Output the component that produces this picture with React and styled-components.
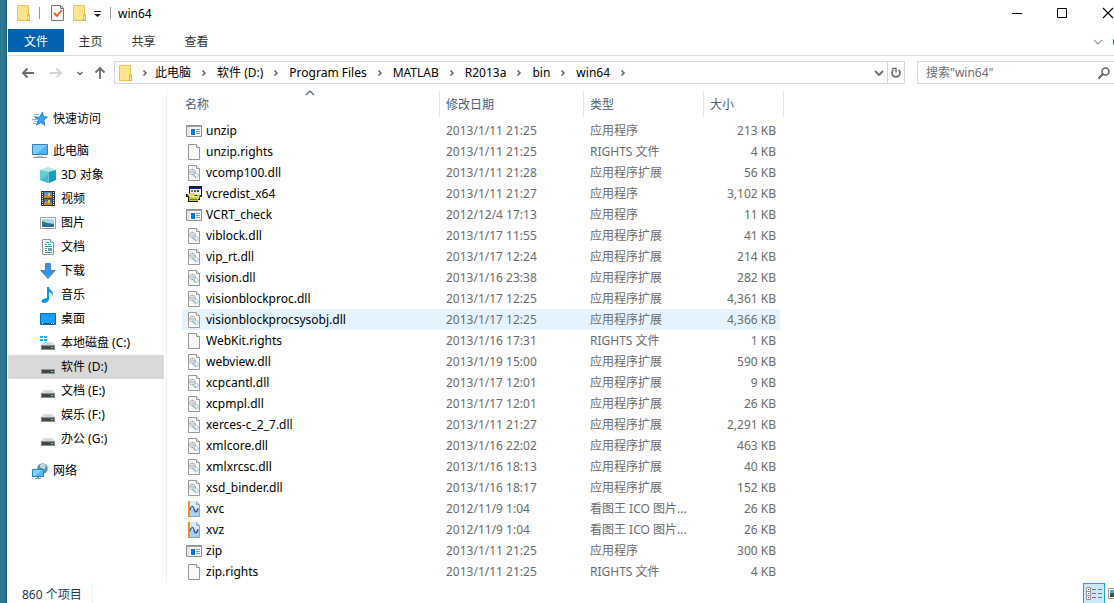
import React, { useState } from "react";
import styled, { createGlobalStyle, css } from "styled-components";

const places = [
  { name: "快速访问", icon: "star" },
  { name: "此电脑", icon: "computer", spaced: true },
  { name: "3D 对象", icon: "cube", nested: true },
  { name: "视频", icon: "video", nested: true },
  { name: "图片", icon: "picture", nested: true },
  { name: "文档", icon: "document", nested: true },
  { name: "下载", icon: "download", nested: true },
  { name: "音乐", icon: "music", nested: true },
  { name: "桌面", icon: "desktop", nested: true },
  { name: "本地磁盘 (C:)", icon: "systemDrive", nested: true },
  { name: "软件 (D:)", icon: "drive", nested: true },
  { name: "文档 (E:)", icon: "drive", nested: true },
  { name: "娱乐 (F:)", icon: "drive", nested: true },
  { name: "办公 (G:)", icon: "drive", nested: true },
  { name: "网络", icon: "network", spaced: true },
];

const crumbs = [
  "此电脑",
  "软件 (D:)",
  "Program Files",
  "MATLAB",
  "R2013a",
  "bin",
  "win64",
];

const types = {
  app: "应用程序",
  blank: "RIGHTS 文件",
  dll: "应用程序扩展",
  installer: "应用程序",
  ico: "看图王 ICO 图片...",
};

const files = [
  ["unzip", "2013/1/11 21:25", "app", "213 KB"],
  ["unzip.rights", "2013/1/11 21:25", "blank", "4 KB"],
  ["vcomp100.dll", "2013/1/11 21:28", "dll", "56 KB"],
  ["vcredist_x64", "2013/1/11 21:27", "installer", "3,102 KB"],
  ["VCRT_check", "2012/12/4 17:13", "app", "11 KB"],
  ["viblock.dll", "2013/1/17 11:55", "dll", "41 KB"],
  ["vip_rt.dll", "2013/1/17 12:24", "dll", "214 KB"],
  ["vision.dll", "2013/1/16 23:38", "dll", "282 KB"],
  ["visionblockproc.dll", "2013/1/17 12:25", "dll", "4,361 KB"],
  ["visionblockprocsysobj.dll", "2013/1/17 12:25", "dll", "4,366 KB"],
  ["WebKit.rights", "2013/1/16 17:31", "blank", "1 KB"],
  ["webview.dll", "2013/1/19 15:00", "dll", "590 KB"],
  ["xcpcantl.dll", "2013/1/17 12:01", "dll", "9 KB"],
  ["xcpmpl.dll", "2013/1/17 12:01", "dll", "26 KB"],
  ["xerces-c_2_7.dll", "2013/1/11 21:27", "dll", "2,291 KB"],
  ["xmlcore.dll", "2013/1/16 22:02", "dll", "463 KB"],
  ["xmlxrcsc.dll", "2013/1/16 18:13", "dll", "40 KB"],
  ["xsd_binder.dll", "2013/1/16 18:17", "dll", "152 KB"],
  ["xvc", "2012/11/9 1:04", "ico", "26 KB"],
  ["xvz", "2012/11/9 1:04", "ico", "26 KB"],
  ["zip", "2013/1/11 21:25", "app", "300 KB"],
  ["zip.rights", "2013/1/11 21:25", "blank", "4 KB"],
];

const page = (
  <>
    <path d="M2.500 .5h8l3 3v12h-11z" fill="#fafafa" stroke="#999" />
    <path d="M10.500 .5v3h3" fill="#fff" stroke="#999" />
  </>
);

const driveBody = (
  <>
    <path d="M4 7h8l3 4H1z" fill="#d5d7da" />
    <path d="M1 10h14v5H1z" fill="#8d9094" />
    <path d="M2 11h12v3H2z" fill="#45484b" />
    <path d="M11 12h2v1h-2z" fill="#4ef04e" />
  </>
);

const drawings = {
  star: (
    <>
      <path d="M2 3.500h5M1 5.500h4M0 8.500h4M2 10.500h3M1 12.500h3" stroke="#6cbdf0" />
      <path d="M10.500 1l.8 4.500 4.200.6-3.600 3 .9 5.400-4-3-4.400 2.700 1.800-4.700-3.200-3 4.700-.4z" fill="#39a2e8" stroke="#1977bd" strokeWidth=".8" />
    </>
  ),
  computer: (
    <>
      <path d="M.5 1.500h15v10H.5z" fill="#4cb3f5" stroke="#3c7fa9" />
      <path d="M1 2h14L4 11H1z" fill="#7accff" />
      <path d="M5 13h6v1H5z" fill="#b5c4d0" />
      <path d="M1 14.500h14" stroke="#8199ab" />
    </>
  ),
  cube: (
    <>
      <path d="M0 3l8-3 8 3-7 3z" fill="#a9e9ea" />
      <path d="M0 3l9 2v11l-9-3z" fill="#62cdd2" />
      <path d="M9 5l7-2v10l-7 3z" fill="#139db9" />
      <path d="M0 13l8-5v8z" fill="#47b8c4" />
    </>
  ),
  video: (
    <>
      <path d="M1 0h14v15H1z" fill="#383838" />
      <path d="M4 1h8v6H4z" fill="#4e86d8" />
      <path d="M4 8h8v6H4z" fill="#406fc2" />
      <path d="M5 3h3l1 2h3v2H4V5h1zM5 10h2l2 2h3v2H4v-2h1z" fill="#c78a22" />
      <path d="M8 2h2v3H8zM8 9h2v3H8z" fill="#f3c242" />
      <path d="M2.500 1v14M13.500 1v14" stroke="#eee" strokeDasharray="1 1" />
    </>
  ),
  picture: (
    <>
      <path d="M.5 2.500h15v11H.5z" fill="#fff" stroke="#9aa0a5" />
      <path d="M2 4h12v8H2z" fill="#a9d5f3" />
      <path d="M2 6l5 2 7 1v3H2z" fill="#397765" />
      <path d="M2 10l6-1 6 1v2H2z" fill="#326d9a" />
    </>
  ),
  document: (
    <>
      {page}
      <path d="M6 3.500h3M5 5.500h2M8 5.500h3M5 7.500h7M5 9.500h2M5 11.500h2M5 13.500h7" stroke="#2f91d2" />
      <path d="M8 9h4v3H8z" fill="#6e9fae" />
    </>
  ),
  download: <path d="M5.500 .5h5v7h4.500L8 15.500.8 7.500h4.700z" fill="#3b94e0" stroke="#2774bd" strokeWidth=".8" />,
  music: (
    <path d="M7 0h2c0 3 5 4 4 9-1-3-2-3-4-4v7c0 2-2 4-5 4-2 0-3-1-2-3 1-1 3-2 5-2z" fill="#0798f0" />
  ),
  desktop: (
    <>
      <path d="M.5 2.500h15v11H.5z" fill="#199fff" stroke="#0969ac" />
      <path d="M1 12h14v1H1z" fill="#075890" />
      <path d="M2 12h1v1H2zM11 12h1v1h-1zM13 12h1v1h-1z" fill="#fff" />
    </>
  ),
  drive: driveBody,
  systemDrive: (
    <>
      {driveBody}
      <path d="M0 1h3v2H0zM4 1h3v2H4zM0 4h3v2H0zM4 4h3v2H4z" fill="#16b8ed" />
    </>
  ),
  network: (
    <>
      <circle cx="10.500" cy="5.500" r="5.300" fill="#6592a9" />
      <path d="M9 1c-2 2-1 4 1 4l2 2 2-4c-1-2-3-3-5-2z" fill="#b9d8e2" />
      <path d="M.5 6.500h11v7H.5z" fill="#55b9f7" stroke="#2484bf" />
      <path d="M1 7h9l-7 6H1z" fill="#86d2ff" />
      <path d="M3 15.500h6M5 14.500h2" stroke="#7e9aab" />
    </>
  ),
  app: (
    <>
      <path d="M.5 2.500h15v11H.5z" fill="#fafafa" stroke="#8c9196" />
      <path d="M1 3h14v1H1z" fill="#9da2a6" />
      <path d="M1 4h3v9H1z" fill="#e3e5e7" />
      <path d="M5 6h4v6H5z" fill="#0878d7" />
      <path d="M10 6.500h4M10 8.500h4M10 10.500h4" stroke="#8f979d" />
    </>
  ),
  blank: page,
  dll: (
    <>
      {page}
      <circle cx="6.500" cy="7" r="2.700" fill="#fff" stroke="#9aa1a5" strokeWidth="1.300" strokeDasharray="1.200 .5" />
      <circle cx="6.500" cy="7" r="1" fill="none" stroke="#9aa1a5" strokeWidth=".8" />
      <circle cx="10" cy="10.500" r="2.200" fill="#eaf8ff" stroke="#93bdd4" strokeWidth="1.200" strokeDasharray="1 .5" />
      <path d="M7 9l3 3" stroke="#9aa1a5" strokeWidth=".8" />
    </>
  ),
  installer: (
    <>
      <path d="M3 0h13v11h-2v3h-2v2H2v-5H0V8h3z" fill="#111" />
      <path d="M4 1h11v2H4z" fill="#101f90" />
      <path d="M4 3h11v6H4z" fill="#eee" />
      <path d="M5 4h2v2H5z" fill="#20a0a0" />
      <path d="M8 4h2v2H8z" fill="#d32b34" />
      <path d="M11 4h2v2h-2z" fill="#2839c8" />
      <path d="M3 10h9v5H3z" fill="#c9c832" />
      <path d="M1 9l3-2h5v2l-1 1H2zM11 9l3-1-1 5h-1z" fill="#dfdd58" />
      <path d="M4 10h7v1H4z" fill="#fff59d" />
      <path d="M4 13h7v1H4z" fill="#777118" />
    </>
  ),
  ico: (
    <>
      <path d="M2 0h9l3 3v13H2z" fill="#a8d3ed" />
      <path d="M4 0h7v4h3v4H4z" fill="#d7edf8" />
      <path d="M2 0h2v16H2z" fill="#f18d26" />
      <path d="M10.500 .5v3h3v12H4" fill="none" stroke="#8da8b8" />
      <path d="M4 9c1-4 3-5 4-1s3 4 4-1" fill="none" stroke="#4a4d9c" strokeWidth="1.300" />
    </>
  ),
  folder: (
    <>
      <path d="M1.500 .5h11v9h1v6h-12z" fill="#ffe48f" stroke="#efc64f" />
      <path d="M11.500 15V10h2v5.500h-3" fill="#ffe9a3" stroke="#e7b932" />
    </>
  ),
  checked: (
    <>
      <path d="M1.500 .5h9l3 3v12h-12z" fill="#f6f6f6" stroke="#777" />
      <path d="M10.500 .5v3h3" fill="none" stroke="#777" />
      <path d="M4 8l3 3 5-6" fill="none" stroke="#ee621c" strokeWidth="1.800" />
    </>
  ),
  back: <path d="M14 8H3M7.500 3.500L3 8l4.500 4.500" fill="none" stroke="currentColor" strokeWidth="1.800" />,
  forward: <path d="M2 8h11M8.500 3.500L13 8l-4.500 4.500" fill="none" stroke="currentColor" strokeWidth="1.800" />,
  up: <path d="M8 14V3M3.500 7.500L8 3l4.500 4.500" fill="none" stroke="currentColor" strokeWidth="1.800" />,
  chevronRight: <path d="M6.500 5.500L9 8l-2.500 2.500" fill="none" stroke="currentColor" strokeWidth="1.500" />,
  chevronDown: <path d="M4 6l4 4 4-4" fill="none" stroke="currentColor" strokeWidth="1.800" />,
  smallDown: <path d="M5.500 7L8 9.500 10.500 7" fill="none" stroke="currentColor" strokeWidth="1.500" />,
  thinDown: <path d="M4 6l4 4 4-4" fill="none" stroke="currentColor" strokeWidth="1.200" />,
  sortUp: <path d="M4 10l4-4 4 4" fill="none" stroke="currentColor" strokeWidth="1.200" />,
  caret: (
    <>
      <path d="M5 6.500h7" stroke="#222" />
      <path d="M5 9h7l-3.500 3z" fill="#222" />
    </>
  ),
  refresh: (
    <>
      <path d="M10.500 4.800a4 4 0 1 1-5 0" fill="none" stroke="currentColor" strokeWidth="1.700" />
      <path d="M4 3.500h4v4" fill="none" stroke="currentColor" strokeWidth="1.500" />
    </>
  ),
  search: (
    <>
      <circle cx="9.500" cy="6.500" r="3.500" fill="none" stroke="currentColor" strokeWidth="1.600" />
      <path d="M7 9l-4.500 4.500" stroke="currentColor" strokeWidth="2" />
    </>
  ),
  minimize: <path d="M4 8.500h10" stroke="#000" />,
  maximize: <path d="M3.500 3.500h9v9h-9z" fill="none" stroke="#000" />,
  close: <path d="M3 3l10 10M13 3L3 13" stroke="#000" strokeWidth="1.100" />,
  details: (
    <>
      <path d="M.5 1.500h4v4h-4zM.5 5.500h4v4h-4zM.5 9.500h4v4h-4z" fill="#fff" stroke="#9a9a9a" />
      <path d="M2 3h1v1H2z" fill="#555" />
      <path d="M2 7h1v1H2z" fill="#3b78d4" />
      <path d="M2 11h1v1H2z" fill="#c22" />
      <path d="M6 3.500h4M12 3.500h4M6 7.500h4M12 7.500h4M6 11.500h4M12 11.500h4" stroke="#777" />
    </>
  ),
  thumbnails: (
    <>
      <path d="M.5 2.500h14v10H.5z" fill="#fff" stroke="#999" />
      <path d="M2 4h11v4H2z" fill="#5e9ee2" />
      <path d="M2 7h11v4H2z" fill="#36594f" />
    </>
  ),
};

const Icon = ({ name }) => (
  <Glyph viewBox="0 0 16 16" aria-hidden="true">
    {drawings[name]}
  </Glyph>
);

const App = () => {
  const [place, setPlace] = useState("软件 (D:)");
  const [query, setQuery] = useState("");

  return (
    <Desktop>
      <GlobalStyle />
      <Window>
        <TitleBar>
          <QuickAccess>
            <Icon name="folder" />
            <Separator />
            <QuickButton aria-label="属性">
              <Icon name="checked" />
            </QuickButton>
            <QuickButton aria-label="新建文件夹">
              <Icon name="folder" />
            </QuickButton>
            <CaretButton aria-label="自定义快速访问工具栏">
              <Icon name="caret" />
            </CaretButton>
            <Separator />
          </QuickAccess>
          <Title>win64</Title>
          <WindowButton aria-label="最小化">
            <Icon name="minimize" />
          </WindowButton>
          <WindowButton aria-label="最大化">
            <Icon name="maximize" />
          </WindowButton>
          <WindowButton aria-label="关闭">
            <Icon name="close" />
          </WindowButton>
        </TitleBar>

        <Ribbon>
          <FileTab>文件</FileTab>
          <Tab>主页</Tab>
          <Tab>共享</Tab>
          <Tab>查看</Tab>
          <RibbonTools>
            <ExpandButton aria-label="展开功能区">
              <Icon name="thinDown" />
            </ExpandButton>
            <HelpButton aria-label="帮助" />
          </RibbonTools>
        </Ribbon>

        <AddressRow>
          <HistoryButtons>
            <ArrowButton aria-label="后退">
              <Icon name="back" />
            </ArrowButton>
            <ArrowButton aria-label="前进" disabled>
              <Icon name="forward" />
            </ArrowButton>
            <RecentButton aria-label="最近浏览的位置">
              <Icon name="smallDown" />
            </RecentButton>
            <RecentButton aria-label="上移">
              <Icon name="up" />
            </RecentButton>
          </HistoryButtons>
          <AddressBox>
            <Icon name="folder" />
            <CrumbArrow $first>
              <Icon name="chevronRight" />
            </CrumbArrow>
            {crumbs.map((crumb) => (
              <React.Fragment key={crumb}>
                <Crumb href="#">{crumb}</Crumb>
                <CrumbArrow>
                  <Icon name="chevronRight" />
                </CrumbArrow>
              </React.Fragment>
            ))}
            <AddressTools>
              <BoxButton aria-label="以前的位置">
                <Icon name="chevronDown" />
              </BoxButton>
              <BoxButton aria-label="刷新" $divided>
                <Icon name="refresh" />
              </BoxButton>
            </AddressTools>
          </AddressBox>
          <SearchBox>
            <SearchInput
              aria-label="搜索"
              placeholder={'搜索"win64"'}
              value={query}
              onChange={(e) => setQuery(e.target.value)}
            />
            <Icon name="search" />
          </SearchBox>
        </AddressRow>

        <Body>
          <Sidebar>
            {places.map(({ name, icon, nested, spaced }) => (
              <Place
                key={name}
                href="#"
                $nested={nested}
                $spaced={spaced}
                $selected={place === name}
                onClick={() => setPlace(name)}
              >
                <Icon name={icon} />
                {name}
              </Place>
            ))}
          </Sidebar>
          <Content>
            <FileTable>
              <colgroup>
                <Column $width={258} />
                <Column $width={144} />
                <Column $width={120} />
                <Column $width={80} />
              </colgroup>
              <thead>
                <tr>
                  <HeadCell>
                    <HeadButton $first>
                      名称
                      <SortMark>
                        <Icon name="sortUp" />
                      </SortMark>
                    </HeadButton>
                  </HeadCell>
                  <HeadCell>
                    <HeadButton>修改日期</HeadButton>
                  </HeadCell>
                  <HeadCell>
                    <HeadButton>类型</HeadButton>
                  </HeadCell>
                  <HeadCell>
                    <HeadButton>大小</HeadButton>
                  </HeadCell>
                </tr>
              </thead>
              <tbody>
                {files.map(([name, date, kind, size]) => (
                  <FileRow
                    key={name}
                    $hovered={name === "visionblockprocsysobj.dll"}
                  >
                    <Cell>
                      <FileName>
                        <Icon name={kind} />
                        {name}
                      </FileName>
                    </Cell>
                    <Cell>{date}</Cell>
                    <Cell>{types[kind]}</Cell>
                    <SizeCell>{size}</SizeCell>
                  </FileRow>
                ))}
              </tbody>
            </FileTable>
          </Content>
        </Body>

        <StatusBar>
          <ItemCount>860 个项目</ItemCount>
          <ViewButton aria-label="详细信息" $active>
            <Icon name="details" />
          </ViewButton>
          <ViewButton aria-label="大缩略图">
            <Icon name="thumbnails" />
          </ViewButton>
        </StatusBar>
      </Window>
    </Desktop>
  );
};

const GlobalStyle = createGlobalStyle`
  * {
    box-sizing: border-box;
  }
  body {
    margin: 0;
    overflow: hidden;
  }
  body, button, input {
    font-family: "Noto Sans", "Noto Sans CJK SC", sans-serif;
    font-size: 12px;
    line-height: 20px;
  }
  button {
    display: flex;
    align-items: center;
    justify-content: center;
    padding: 0;
    border: none;
    background: transparent;
    color: inherit;
  }
  a {
    color: inherit;
    text-decoration: none;
  }
`;

const Glyph = styled.svg`
  display: block;
  flex: none;
  width: 16px;
  height: 16px;
`;

const Desktop = styled.div`
  height: 100vh;
  padding-left: 7px;
  overflow: hidden;
  background: linear-gradient(90deg, #2b7890 4px, #22627a 7px);
`;

/* the window hangs over the right edge of the desktop */
const Window = styled.div`
  display: flex;
  flex-direction: column;
  height: 100%;
  margin-right: -17px;
  padding-left: 1px;
  background: #fff;
  color: #000;
`;

const TitleBar = styled.header`
  display: flex;
  flex: none;
  height: 29px;
`;

const QuickAccess = styled.div`
  display: flex;
  align-items: center;
  height: 26px;
  padding-left: 8px;
`;

const Separator = styled.span`
  width: 1px;
  height: 12px;
  margin: 0 7px;
  background: #999;
`;

const QuickButton = styled.button`
  width: 22px;
  height: 22px;
`;

const CaretButton = styled.button`
  width: 12px;
  height: 22px;
`;

const Title = styled.span`
  flex: 1;
  line-height: 28px;
`;

const WindowButton = styled.button`
  width: 46px;
  height: 26px;
`;

const Ribbon = styled.nav`
  display: flex;
  flex: none;
  height: 27px;
  border-bottom: 1px solid #dadbdc;
`;

const Tab = styled.button`
  width: 53px;
  height: 23px;
  padding-top: 2px;
  color: #333;
`;

const FileTab = styled(Tab)`
  width: 56px;
  background: #0063b1;
  color: #fff;
`;

const RibbonTools = styled.div`
  display: flex;
  align-items: center;
  gap: 7px;
  margin-left: auto;
  padding-right: 2px;
  color: #999;
`;

const ExpandButton = styled.button`
  width: 16px;
  height: 23px;
`;

const HelpButton = styled.button`
  width: 16px;
  height: 16px;
  border-radius: 50%;
  background: #0063b1;
`;

const AddressRow = styled.div`
  display: flex;
  flex: none;
  gap: 12px;
  height: 34px;
  padding: 5px 8px 6px 6px;
`;

const HistoryButtons = styled.div`
  display: flex;
  align-items: center;
  width: 100px;
  margin-right: -12px;
  color: #6b6b6b;
`;

const ArrowButton = styled.button`
  width: 28px;
  height: 22px;

  &:disabled {
    color: #d5d5d5;
  }
`;

const RecentButton = styled.button`
  width: 20px;
  height: 22px;
`;

const AddressBox = styled.div`
  display: flex;
  flex: 1;
  align-items: center;
  padding-left: 3px;
  border: 1px solid #d9d9d9;
`;

const Crumb = styled.a`
  white-space: nowrap;
`;

const CrumbArrow = styled.span`
  display: flex;
  flex: none;
  justify-content: center;
  width: ${({ $first }) => ($first ? "21px" : "26px")};
  color: #666;
`;

const AddressTools = styled.div`
  display: flex;
  align-self: stretch;
  margin-left: auto;
  color: #707070;
`;

const BoxButton = styled.button`
  width: 17px;
  border-left: ${({ $divided }) => ($divided ? "1px solid #d9d9d9" : "none")};
`;

const SearchBox = styled.div`
  display: flex;
  align-items: center;
  flex: none;
  width: 206px;
  padding: 0 10px 0 8px;
  border: 1px solid #d9d9d9;
  color: #666;
`;

const SearchInput = styled.input`
  flex: 1;
  min-width: 0;
  padding: 0;
  border: none;
  outline: none;

  &::placeholder {
    color: #6d6d6d;
    opacity: 1;
  }
`;

const Body = styled.div`
  display: flex;
  flex: 1;
  min-height: 0;
`;

const Sidebar = styled.nav`
  flex: none;
  width: 159px;
  padding: 17px 2px 0 0;
  border-right: 1px solid #f0f0f0;
`;

const Place = styled.a`
  display: flex;
  align-items: center;
  gap: 5px;
  height: 24px;
  margin-top: ${({ $spaced }) => ($spaced ? "8px" : "0")};
  padding-left: ${({ $nested }) => ($nested ? "32px" : "24px")};
  background: ${({ $selected }) => ($selected ? "#d9d9d9" : "transparent")};
`;

const Content = styled.main`
  flex: 1;
  padding-left: 15px;
  overflow: hidden;
`;

const FileTable = styled.table`
  table-layout: fixed;
  width: 602px;
  border-spacing: 0;
`;

const Column = styled.col`
  width: ${({ $width }) => $width}px;
`;

const HeadCell = styled.th`
  height: 30px;
  padding: 0 0 2px;
  font-weight: normal;
`;

const HeadButton = styled.button`
  position: relative;
  justify-content: flex-start;
  width: 100%;
  height: 28px;
  padding-top: 2px;
  padding-left: ${({ $first }) => ($first ? "3px" : "6px")};
  border-right: 1px solid #e5e5e5;
  color: #4c607a;
`;

const SortMark = styled.span`
  position: absolute;
  top: -5px;
  left: calc(50% - 9px);
`;

const Cell = styled.td`
  height: 21px;
  padding: 0 0 0 6px;
  color: #6d6d6d;
  white-space: nowrap;

  &:first-child {
    padding-left: 4px;
    color: #000;
  }
`;

const SizeCell = styled(Cell)`
  padding-right: 4px;
  border-right: 4px solid transparent;
  background-clip: padding-box;
  text-align: right;
`;

const FileRow = styled.tr`
  ${({ $hovered }) =>
    $hovered &&
    css`
      ${Cell}, ${SizeCell} {
        background-color: #e5f3ff;
      }
    `}
`;

const FileName = styled.span`
  display: flex;
  align-items: center;
  gap: 4px;
`;

const StatusBar = styled.footer`
  display: flex;
  flex: none;
  height: 20px;
  padding: 0 4px 0 14px;
  color: #1e395b;
`;

const ItemCount = styled.span`
  margin-right: auto;
  padding-right: 10px;
  border-right: 1px solid #f0f0f0;
  line-height: 23px;
`;

const ViewButton = styled.button`
  flex: none;
  width: 22px;
  height: 22px;
  border: 1px solid ${({ $active }) => ($active ? "#26a0da" : "transparent")};
  background: ${({ $active }) => ($active ? "#cbe8f6" : "transparent")};
`;

export default App;
